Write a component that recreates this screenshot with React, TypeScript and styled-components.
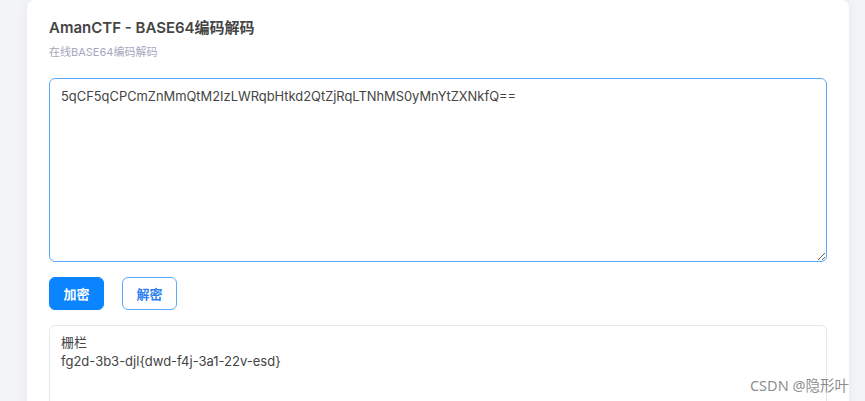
import React from "react";
import styled, { createGlobalStyle } from "styled-components";

const Global = createGlobalStyle`
  html, body { margin: 0; padding: 0; background: #f3f4f6; }
  body { font-family: Inter, "Noto Sans CJK SC", sans-serif; overflow: hidden; }
`;

const Page = styled.div`
  position: relative;
  height: 401px;
  padding-left: 27px;
  background: #f3f4f6;
  overflow: hidden;
`;

const Card = styled.div`
  width: 822px;
  min-height: 460px;
  box-sizing: border-box;
  background: #ffffff;
  border-radius: 8px;
  box-shadow: 0 0 12px rgba(0, 0, 0, 0.05);
  padding: 18px 22px;
  display: flex;
  flex-direction: column;
`;

const Title = styled.h1`
  margin: 0;
  font-size: 15px;
  line-height: 20px;
  font-weight: 600;
  color: #444;
`;

const Subtitle = styled.p`
  margin: 6px 0 0;
  font-size: 11px;
  line-height: 16px;
  color: #a5a8bc;
`;

const Input = styled.textarea`
  display: block;
  margin-top: 18px;
  width: 778px;
  height: 184px;
  box-sizing: border-box;
  padding: 8px 11px;
  border: 1px solid #5aaaff;
  border-radius: 6px;
  outline: none;
  font-family: Inter, "Noto Sans CJK SC", sans-serif;
  font-size: 12.9px;
  line-height: 19px;
  color: #444;
`;

const Actions = styled.div`
  display: flex;
  gap: 18px;
  margin-top: 15px;
`;

const Button = styled.button<{ $primary?: boolean }>`
  width: 55px;
  height: 33px;
  box-sizing: border-box;
  border-radius: 6px;
  font-family: Inter, "Noto Sans CJK SC", sans-serif;
  font-size: 13px;
  font-weight: 700;
  cursor: pointer;
  border: 1px solid ${(p) => (p.$primary ? "#0b84ff" : "#5aaaff")};
  background: ${(p) => (p.$primary ? "#0b84ff" : "#ffffff")};
  color: ${(p) => (p.$primary ? "#ffffff" : "#2f7fef")};
`;

const Output = styled.div`
  margin-top: 15px;
  width: 778px;
  min-height: 120px;
  box-sizing: border-box;
  padding: 7px 11px;
  border: 1px solid #e6e7ea;
  border-radius: 6px;
  font-size: 13px;
  line-height: 19px;
  color: #444;
  white-space: pre-wrap;
`;

const Watermark = styled.div`
  position: absolute;
  right: 16px;
  bottom: 6px;
  font-family: "Noto Sans", "Noto Sans CJK SC", sans-serif;
  font-size: 14.5px;
  color: rgba(120, 120, 120, 0.85);
`;

export default function App() {
  return (
    <Page>
      <Global />
      <Card>
        <Title>AmanCTF - BASE64编码解码</Title>
        <Subtitle>在线BASE64编码解码</Subtitle>
        <Input defaultValue="5qCF5qCPCmZnMmQtM2IzLWRqbHtkd2QtZjRqLTNhMS0yMnYtZXNkfQ==" />
        <Actions>
          <Button $primary>加密</Button>
          <Button>解密</Button>
        </Actions>
        <Output>{"栅栏\nfg2d-3b3-djl{dwd-f4j-3a1-22v-esd}"}</Output>
      </Card>
      <Watermark>CSDN @隐形叶</Watermark>
    </Page>
  );
}
